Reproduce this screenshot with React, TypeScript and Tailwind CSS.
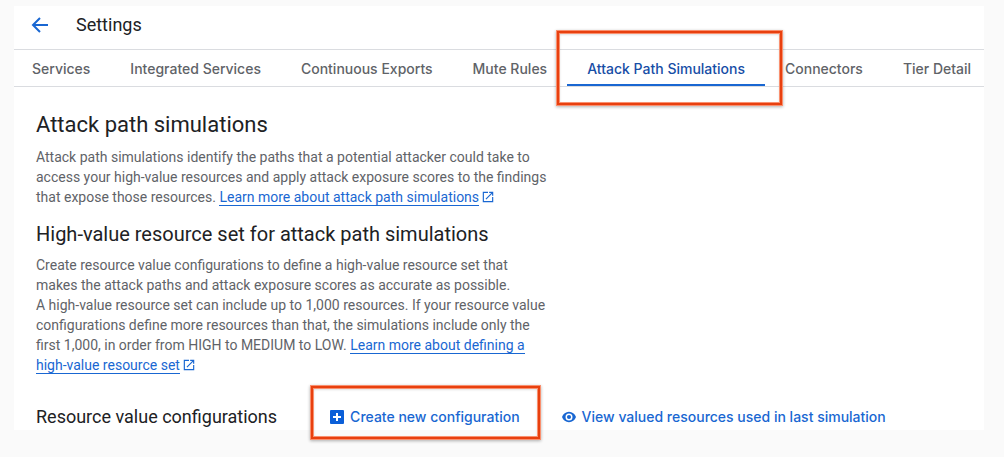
import type { ReactNode } from 'react';

const tabs = [
  { label: 'Services' },
  { label: 'Integrated Services' },
  { label: 'Continuous Exports' },
  { label: 'Mute Rules' },
  { label: 'Attack Path Simulations', active: true },
  { label: 'Connectors' },
  { label: 'Tier Detail' },
];

function Highlight({ className }: { className: string }) {
  return (
    <span
      aria-hidden="true"
      className={`pointer-events-none absolute border border-[#f9906f] shadow-[0_1px_3px_rgba(0,0,0,0.3)] ${className}`}
    >
      <span className="block h-full border-2 border-[#e8400f] shadow-[inset_0_0_0_1px_#f9906f,inset_0_1px_3px_rgba(0,0,0,0.25)]" />
    </span>
  );
}

function ExternalLink({ children }: { children: ReactNode }) {
  return (
    <>
      <a href="#" className="border-b border-[#1967d2] text-[#1967d2]">
        {children}
      </a>
      <svg viewBox="0 0 24 24" className="ml-0.5 inline size-3.5 align-[-2px] text-[#1967d2]" fill="currentColor">
        <path d="M19 19H5V5h7V3H3v18h18v-9h-2v7zM14 3v2h3.59l-9.83 9.83 1.41 1.41L19 6.41V10h2V3h-7z" />
      </svg>
    </>
  );
}

export default function App() {
  return (
    <div className="min-h-screen bg-[#fafafa] pt-1.5 pr-5 pb-6 pl-3.5 font-[Roboto,sans-serif]">
      <main className="overflow-x-clip bg-white text-[#202124]">
        <header className="flex h-11 items-center gap-[26px] border-b border-[#dadce0] pb-1.5 pl-4">
          <button type="button" aria-label="Back" className="text-[#1967d2]">
            <svg viewBox="0 0 20 20" className="size-5" fill="none" stroke="currentColor" strokeWidth="2">
              <path d="M18 10H3M10 3l-7 7 7 7" />
            </svg>
          </button>
          <h1 className="text-lg">Settings</h1>
        </header>

        <nav className="flex h-[37px] border-b border-[#dadce0] font-[Inter,sans-serif] text-sm font-medium whitespace-nowrap">
          {tabs.map((tab) => (
            <a
              key={tab.label}
              href="#"
              aria-current={tab.active ? 'page' : undefined}
              className={`relative flex shrink-0 items-center px-5 pt-0.5 first:pl-[18px] ${
                tab.active ? 'border-b-2 border-[#1967d2] pt-1 text-[#174ea6]' : 'text-[#5f6368]'
              }`}
            >
              {tab.label}
              {tab.active && <Highlight className="-top-5 -right-[18px] -bottom-[22px] -left-[11px]" />}
            </a>
          ))}
        </nav>

        <section className="px-[22px] pt-5">
          <h2 className="text-[22px] leading-9">Attack path simulations</h2>
          <p className="mt-1 max-w-[520px] text-sm leading-5 text-[#5f6368]">
            Attack path simulations identify the paths that a potential attacker could take to access your high-value
            resources and apply attack exposure scores to the findings that expose those resources.{' '}
            <ExternalLink>Learn more about attack path simulations</ExternalLink>
          </p>

          <h2 className="mt-[7px] mb-px text-xl leading-10">High-value resource set for attack path simulations</h2>
          <p className="max-w-[520px] text-sm leading-5 text-[#5f6368]">
            Create resource value configurations to define a high-value resource set that
            <br />
            makes the attack paths and attack exposure scores as accurate as possible.
            <br />A high-value resource set can include up to 1,000 resources. If your resource value configurations
            define more resources than that, the simulations include only the first 1,000, in order from HIGH to MEDIUM
            to LOW. <ExternalLink>Learn more about defining a high-value resource set</ExternalLink>
          </p>

          <div className="mt-[29px] flex items-center whitespace-nowrap">
            <h3 className="text-lg leading-[26px]">Resource value configurations</h3>
            <div className="ml-[53px] flex items-center gap-[42px] font-[Inter,sans-serif] text-sm font-medium text-[#1967d2]">
              <button type="button" className="relative flex items-center gap-1.5">
                <svg viewBox="0 0 14 14" className="size-3.5 text-[#0b5fd8]">
                  <rect width="14" height="14" rx="1" fill="currentColor" />
                  <path d="M7 3v8M3 7h8" stroke="white" strokeWidth="2" />
                </svg>
                Create new configuration
                <Highlight className="-top-[22px] -right-[21px] -bottom-[13px] -left-5" />
              </button>
              <button type="button" className="flex items-center gap-1.5">
                <svg viewBox="0 0 24 24" className="size-3.5" fill="currentColor">
                  <path d="M12 3C6.500 3 2 6.600 0 12c2 5.400 6.500 9 12 9s10-3.600 12-9c-2-5.400-6.500-9-12-9zm0 15a6 6 0 1 1 0-12 6 6 0 0 1 0 12zm0-9.500a3.500 3.500 0 1 0 0 7 3.500 3.500 0 0 0 0-7z" />
                </svg>
                View valued resources used in last simulation
              </button>
            </div>
          </div>
        </section>
      </main>
    </div>
  );
}
